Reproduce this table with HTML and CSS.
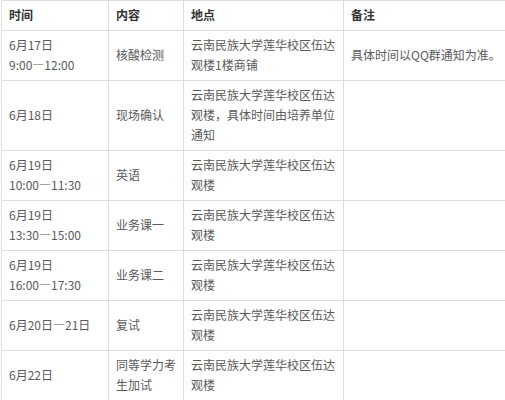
FILE: index.html
```html
<!DOCTYPE html>
<html lang="zh-CN">
<head>
<meta charset="utf-8">
<link rel="stylesheet" href="styles.css">
</head>
<body>
<table class="schedule">
  <colgroup>
    <col class="c1"><col class="c2"><col class="c3"><col class="c4">
  </colgroup>
  <thead>
    <tr><th>时间</th><th>内容</th><th>地点</th><th>备注</th></tr>
  </thead>
  <tbody>
    <tr><td>6月17日<br>9:00—12:00</td><td>核酸检测</td><td>云南民族大学莲华校区伍达观楼1楼商铺</td><td>具体时间以QQ群通知为准。</td></tr>
    <tr><td>6月18日</td><td>现场确认</td><td>云南民族大学莲华校区伍达观楼，具体时间由培养单位通知</td><td></td></tr>
    <tr><td>6月19日<br>10:00—11:30</td><td>英语</td><td>云南民族大学莲华校区伍达观楼</td><td></td></tr>
    <tr><td>6月19日<br>13:30—15:00</td><td>业务课一</td><td>云南民族大学莲华校区伍达观楼</td><td></td></tr>
    <tr><td>6月19日<br>16:00—17:30</td><td>业务课二</td><td>云南民族大学莲华校区伍达观楼</td><td></td></tr>
    <tr><td>6月20日—21日</td><td>复试</td><td>云南民族大学莲华校区伍达观楼</td><td></td></tr>
    <tr><td>6月22日</td><td>同等学力考生加试</td><td>云南民族大学莲华校区伍达观楼</td><td></td></tr>
  </tbody>
</table>
</body>
</html>
```

FILE: styles.css
```css
html, body {
  margin: 0;
  padding: 0;
  background: #fff;
  overflow: hidden;
}
body {
  padding-left: 1px;
}
.schedule {
  border-collapse: collapse;
  table-layout: fixed;
  width: 520px;
  font-family: "Noto Sans CJK SC", "Microsoft YaHei", sans-serif;
  font-size: 12px;
  line-height: 20px;
  color: #5a5a5a;
}
.c1 { width: 107px; }
.c2 { width: 75px; }
.c3 { width: 160px; }
.c4 { width: 178px; }
.schedule th,
.schedule td {
  border: 1px solid #dedede;
  padding: 4px 7px 5px;
  text-align: left;
  vertical-align: middle;
  word-break: break-all;
}
.schedule th {
  font-weight: bold;
  color: #333;
}
```
